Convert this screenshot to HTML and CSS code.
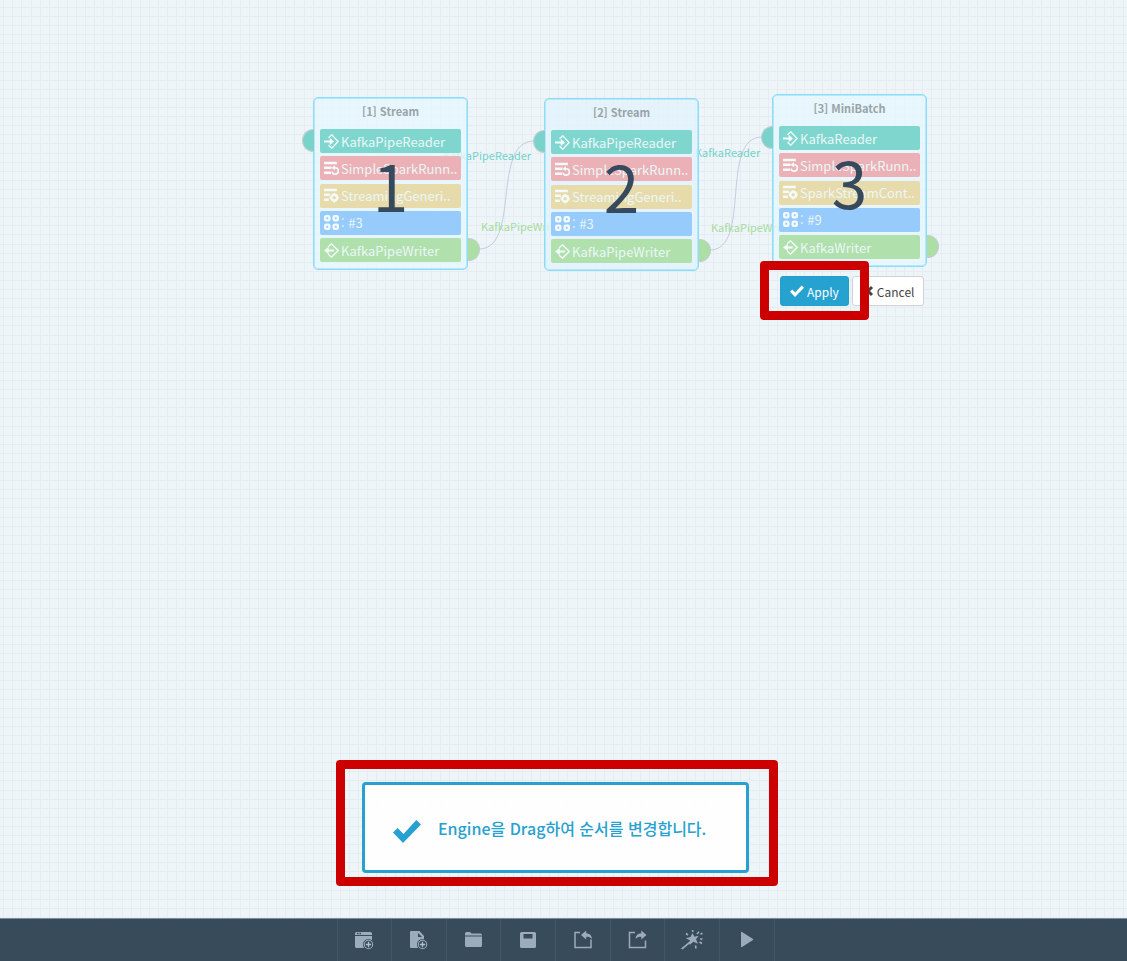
FILE: index.html
```
<!DOCTYPE html>
<html lang="ko">
<head>
<meta charset="utf-8">
<title>Engine order</title>
<link rel="stylesheet" href="styles.css">
</head>
<body>
<svg class="sprite" aria-hidden="true">
  <symbol id="i-reader" viewBox="0 0 14 14"><path d="M4.200 3.600 7.300.8 13.200 7l-5.900 6.200L4.200 10.400" fill="none" stroke="currentColor" stroke-width="1.300"/><path d="M0 6h5.300V3.400L9.400 7l-4.100 3.600V8H0z" fill="currentColor"/></symbol>
  <symbol id="i-writer" viewBox="0 0 14 14"><path d="M3.900 3.600 7 .8 13.200 7 7 13.200 3.900 10.400" fill="none" stroke="currentColor" stroke-width="1.300"/><path d="M9.200 6H4.400V3.600L0 7l4.400 3.400V8h4.800z" fill="currentColor"/></symbol>
  <symbol id="i-runner" viewBox="0 0 14 14"><path d="M0 .7h12v2.300H0zM0 5.200h7v2.200H0zM0 9.800h6.500v2.300H0z" fill="currentColor"/><path d="M9.400 6.300h1a3 3 0 1 1-2.900 3.600" fill="none" stroke="currentColor" stroke-width="1.600"/><path d="m6.900 6.300 3.400-2.300v4.600z" fill="currentColor"/></symbol>
  <symbol id="i-context" viewBox="0 0 14 14"><path d="M0 .7h12v2.300H0zM0 5.200h5.500v2.200H0zM0 9.800h4.500v2.300H0z" fill="currentColor"/><circle cx="9.500" cy="9" r="2.700" fill="none" stroke="currentColor" stroke-width="2.200"/><path d="M9.500 4.600v1.500M9.500 12v1.500M5.200 9h1.500M12.400 9h1.500" stroke="currentColor" stroke-width="1.500"/></symbol>
  <symbol id="i-grid" viewBox="0 0 14 14"><g fill="none" stroke="currentColor" stroke-width="2.200"><rect x="1.100" y="1.100" width="3.900" height="3.900" rx="1"/><rect x="9" y="1.100" width="3.900" height="3.900" rx="1"/><rect x="1.100" y="9" width="3.900" height="3.900" rx="1"/><rect x="9" y="9" width="3.900" height="3.900" rx="1"/></g></symbol>
  <symbol id="i-check" viewBox="0 0 28 24"><path d="M0 13.500 4.600 9l5.900 5.900L23.300 1 28 5.500 10 24z" fill="currentColor"/></symbol>
  <symbol id="i-cross" viewBox="0 0 12 12"><path d="m2 2 8 8M10 2l-8 8" stroke="currentColor" stroke-width="3"/></symbol>
  <symbol id="i-plus" viewBox="0 0 10 10"><circle cx="5" cy="5" r="5" fill="#384b5b"/><circle cx="5" cy="5" r="4.300" fill="#9bacbd"/><circle cx="5" cy="5" r="3.300" fill="#384b5b"/><path d="M5 2.600v4.800M2.600 5h4.800" stroke="#b3c1ce" stroke-width="1.200"/></symbol>
</svg>

<main class="canvas">
  <svg class="grid" aria-hidden="true">
    <defs><pattern id="mesh" width="91" height="91" patternUnits="userSpaceOnUse" x="3" y="7">
      <path d="M0 .5h91M0 9.500h91M0 18.500h91M0 27.500h91M0 36.500h91M0 45.500h91M0 55.500h91M0 64.500h91M0 73.500h91M0 82.500h91M.5 0v91M9.500 0v91M18.500 0v91M28.500 0v91M37.500 0v91M46.500 0v91M55.500 0v91M64.500 0v91M73.500 0v91M82.500 0v91" stroke="#e6ecf1"/>
    </pattern></defs>
    <rect width="100%" height="100%" fill="url(#mesh)"/>
  </svg>
  <svg class="links" aria-hidden="true">
    <path d="M479 249C521 249 491 141 534 141M710 250C752 250 719 137 762 137"/>
  </svg>

  <span class="label read l1">KafkaPipeReader</span>
  <span class="label write l2">KafkaPipeWriter</span>
  <span class="label read l3">KafkaReader</span>
  <span class="label write l4">KafkaPipeWriter</span>

  <section class="node n1">
    <i class="port in"></i><i class="port out"></i>
    <h2>[1] Stream</h2>
    <ul>
      <li class="reader"><svg><use href="#i-reader"/></svg>KafkaPipeReader</li>
      <li class="runner"><svg><use href="#i-runner"/></svg>SimpleSparkRunn..</li>
      <li class="context"><svg><use href="#i-context"/></svg>StreamingGeneri..</li>
      <li class="count"><svg><use href="#i-grid"/></svg>: #3</li>
      <li class="writer"><svg><use href="#i-writer"/></svg>KafkaPipeWriter</li>
    </ul>
    <strong class="order">1</strong>
  </section>
  <section class="node n2">
    <i class="port in"></i><i class="port out"></i>
    <h2>[2] Stream</h2>
    <ul>
      <li class="reader"><svg><use href="#i-reader"/></svg>KafkaPipeReader</li>
      <li class="runner"><svg><use href="#i-runner"/></svg>SimpleSparkRunn..</li>
      <li class="context"><svg><use href="#i-context"/></svg>StreamingGeneri..</li>
      <li class="count"><svg><use href="#i-grid"/></svg>: #3</li>
      <li class="writer"><svg><use href="#i-writer"/></svg>KafkaPipeWriter</li>
    </ul>
    <strong class="order">2</strong>
  </section>
  <section class="node n3">
    <i class="port in"></i><i class="port out"></i>
    <h2>[3] MiniBatch</h2>
    <ul>
      <li class="reader"><svg><use href="#i-reader"/></svg>KafkaReader</li>
      <li class="runner"><svg><use href="#i-runner"/></svg>SimpleSparkRunn..</li>
      <li class="context"><svg><use href="#i-context"/></svg>SparkStreamCont..</li>
      <li class="count"><svg><use href="#i-grid"/></svg>: #9</li>
      <li class="writer"><svg><use href="#i-writer"/></svg>KafkaWriter</li>
    </ul>
    <strong class="order">3</strong>
  </section>

  <div class="actions">
    <button class="btn apply" type="button"><svg><use href="#i-check"/></svg>Apply</button>
    <button class="btn cancel" type="button"><svg><use href="#i-cross"/></svg>Cancel</button>
  </div>
  <div class="mark mark-apply"></div>

  <div class="notice">
    <div class="toast" role="status"><svg><use href="#i-check"/></svg><span>Engine을 Drag하여 순서를 변경합니다.</span></div>
  </div>
</main>

<nav class="toolbar" aria-label="Tools">
  <div class="tools">
    <button type="button" aria-label="New workspace"><svg viewBox="0 0 20 20"><path d="M1 3.500Q1 2 2.500 2h14Q18 2 18 3.500V5H1zM1 6h17v12H2.500Q1 18 1 16.500z" fill="currentColor"/><path d="M3 3.500h1.500M5.500 3.500H7" stroke="#384b5b" stroke-width="1.500"/><use href="#i-plus" x="9" y="9" width="11" height="11"/></svg></button>
    <button type="button" aria-label="New file"><svg viewBox="0 0 20 20"><path d="M1 2q0-1 1-1h8.500L15 6v12H2q-1 0-1-1z" fill="currentColor"/><path d="M9 3v4h4z" fill="#384b5b"/><use href="#i-plus" x="8" y="9" width="11" height="11"/></svg></button>
    <button type="button" aria-label="Open"><svg viewBox="0 0 20 20"><path d="M1 3.500Q1 2 2.500 2H6l1.500 1.500h9Q18 3.500 18 5v.5H1zM1 6.500h17v9q0 1.500-1.500 1.500h-14Q1 17 1 15.500z" fill="currentColor"/></svg></button>
    <button type="button" aria-label="Save"><svg viewBox="0 0 20 20"><path d="M3.500 2h13Q18 2 18 3.500v13q0 1.500-1.500 1.500h-13Q2 18 2 16.500v-13Q2 2 3.500 2zM5.500 4v4.500h9V4z" fill="currentColor" fill-rule="evenodd"/></svg></button>
    <button type="button" aria-label="Import"><svg viewBox="0 0 20 20"><path d="M7 2.500H2V17.500h16v-8" fill="none" stroke="currentColor" stroke-width="1.500"/><path d="m8 5 5.200-4.500v2.800c3.500.2 5.500 2 5.800 5.700-1.700-1.700-3.300-2.300-5.800-2.200V9.500z" fill="currentColor"/></svg></button>
    <button type="button" aria-label="Export"><svg viewBox="0 0 20 20"><path d="M8 2.500H2.500V17.500h16v-7" fill="none" stroke="currentColor" stroke-width="1.500"/><path d="m19.500 5-5.200-4.500v2.800C10.800 3.500 8.800 5.300 8.500 9c1.700-1.700 3.300-2.300 5.800-2.200V9.500z" fill="currentColor"/></svg></button>
    <button type="button" aria-label="Auto arrange"><svg class="wand" viewBox="0 0 24 20"><path d="m12.500 3 1.900 3.700 4.400-.9L16 9.300l2 4.500-4.600-2-3.800 3.200.2-4.700-4-2 4.700-1.400zM10 11l1.500 1L2.500 19.500 1 18.500z" fill="currentColor"/><path d="m12.500 0 .3 2M17 4l2-2.300M20.500 4.200l2-1M20 9h2.500M19.500 12l2.500 1.500M15.500 15.500l.5 3M6 3.500l2 1.500" stroke="currentColor" stroke-width="1.600"/></svg></button>
    <button type="button" aria-label="Run"><svg viewBox="0 0 20 20"><path d="M4 2.500q0-1 1-.5L16 9q.8.500 0 1L5 17q-1 .5-1-.5z" fill="currentColor"/></svg></button>
  </div>
</nav>
<div class="mark mark-toast"></div>
</body>
</html>
```

FILE: styles.css
```
* { box-sizing: border-box; }
body {
  margin: 0;
  height: 100vh;
  display: flex;
  flex-direction: column;
  position: relative;
  overflow: hidden;
  font-family: "Noto Sans CJK KR", sans-serif;
  font-size: 13px;
}
.sprite { position: absolute; width: 0; height: 0; }
.canvas { flex: 1; position: relative; background: #edf5f9; }
.grid, .links { position: absolute; inset: 0; width: 100%; height: 100%; }
.links path { fill: none; stroke: #c3cedb; stroke-width: 1; }

.label { position: absolute; font-size: 11px; line-height: 18px; white-space: nowrap; }
.read { color: #74d1c8; }
.write { color: #a6dc9f; }
.l1 { left: 443px; top: 146px; }
.l2 { left: 481px; top: 217px; }
.l3 { left: 695px; top: 143px; }
.l4 { left: 711px; top: 218px; }

.node {
  position: absolute;
  width: 155px;
  height: 173px;
  padding: 4px 5px 7px;
  display: flex;
  flex-direction: column;
  border: 1px solid #8cdcf8;
  box-shadow: inset 0 0 0 1px #b5e9fa;
  border-radius: 5px;
  background: rgba(230, 248, 254, .8);
}
.n1 { left: 313px; top: 97px; }
.n2 { left: 544px; top: 98px; background: rgba(226, 243, 253, .8); }
.n3 { left: 772px; top: 94px; }
.node h2 {
  margin: 0;
  flex: 1;
  font-size: 11px;
  line-height: 18px;
  text-align: center;
  color: #98a4a8;
}
.node ul {
  height: 133px;
  margin: 0;
  padding: 0 1px;
  display: flex;
  flex-direction: column;
  justify-content: space-between;
  list-style: none;
}
.node li {
  height: 24px;
  padding-left: 4px;
  display: flex;
  align-items: center;
  gap: 2px;
  border-radius: 2px;
  color: #eaf7f8;
  white-space: nowrap;
}
.node li svg { width: 15px; height: 15px; flex: none; color: #f4fbfc; }
.reader { background: rgba(121, 212, 203, .95); }
.runner { background: rgba(236, 173, 178, .95); }
.context { background: rgba(232, 217, 166, .95); }
.count { background: rgba(146, 200, 251, .95); }
.writer { background: rgba(173, 222, 168, .95); }
.order {
  position: absolute;
  inset: 0;
  display: flex;
  align-items: center;
  justify-content: center;
  font-size: 64px;
  font-weight: 400;
  line-height: 1;
  color: #374a5d;
}
.port { position: absolute; width: 12px; height: 23px; border: 1px solid #c0cfd2; }
.in { left: -12px; top: 31px; border-right: 0; border-radius: 12px 0 0 12px; background: #7ad3ca; }
.out { right: -13px; bottom: 8px; border-left: 0; border-radius: 0 12px 12px 0; background: #addea3; }

.actions { position: absolute; left: 780px; top: 276px; display: flex; gap: 3px; }
.btn {
  height: 30px;
  padding: 0 9px;
  display: flex;
  align-items: center;
  gap: 3px;
  border: 1px solid #239fcc;
  border-radius: 3px;
  font: 12px "Noto Sans CJK KR", sans-serif;
}
.btn svg { width: 14px; height: 12px; }
.btn.cancel svg { width: 12px; }
.apply { background: #26a2d0; color: #fff; }
.cancel { background: #fff; border-color: #cfd2d6; color: #444; }
.mark { position: absolute; border: 9px solid #c00; border-radius: 4px; }
.mark-apply { left: 760px; top: 261px; width: 109px; height: 59px; }
.mark-toast { left: 336px; top: 760px; width: 442px; height: 126px; }

.notice {
  position: absolute;
  left: 0;
  right: 16px;
  bottom: 45px;
  display: flex;
  justify-content: center;
}
.toast {
  width: 387px;
  height: 91px;
  padding-left: 28px;
  display: flex;
  align-items: center;
  gap: 17px;
  border: 3px solid #27a1cf;
  border-radius: 4px;
  background: rgba(255, 255, 255, .9);
  color: #27a1cf;
  font-size: 16px;
  font-weight: 500;
  white-space: nowrap;
}
.toast svg { width: 28px; height: 24px; margin-top: 6px; }

.toolbar {
  height: 43px;
  padding-right: 16px;
  display: flex;
  justify-content: center;
  border-top: 1px solid #7d8b98;
  background: #384b5b;
}
.tools { width: 438px; display: flex; border-left: 1px solid #435666; }
.tools button {
  flex: 1;
  padding: 0;
  display: flex;
  align-items: center;
  justify-content: center;
  border: 0;
  border-right: 1px solid #435666;
  background: none;
  color: #9bacbd;
}
.tools svg { width: 20px; height: 20px; }
.tools svg.wand { width: 24px; }
```
